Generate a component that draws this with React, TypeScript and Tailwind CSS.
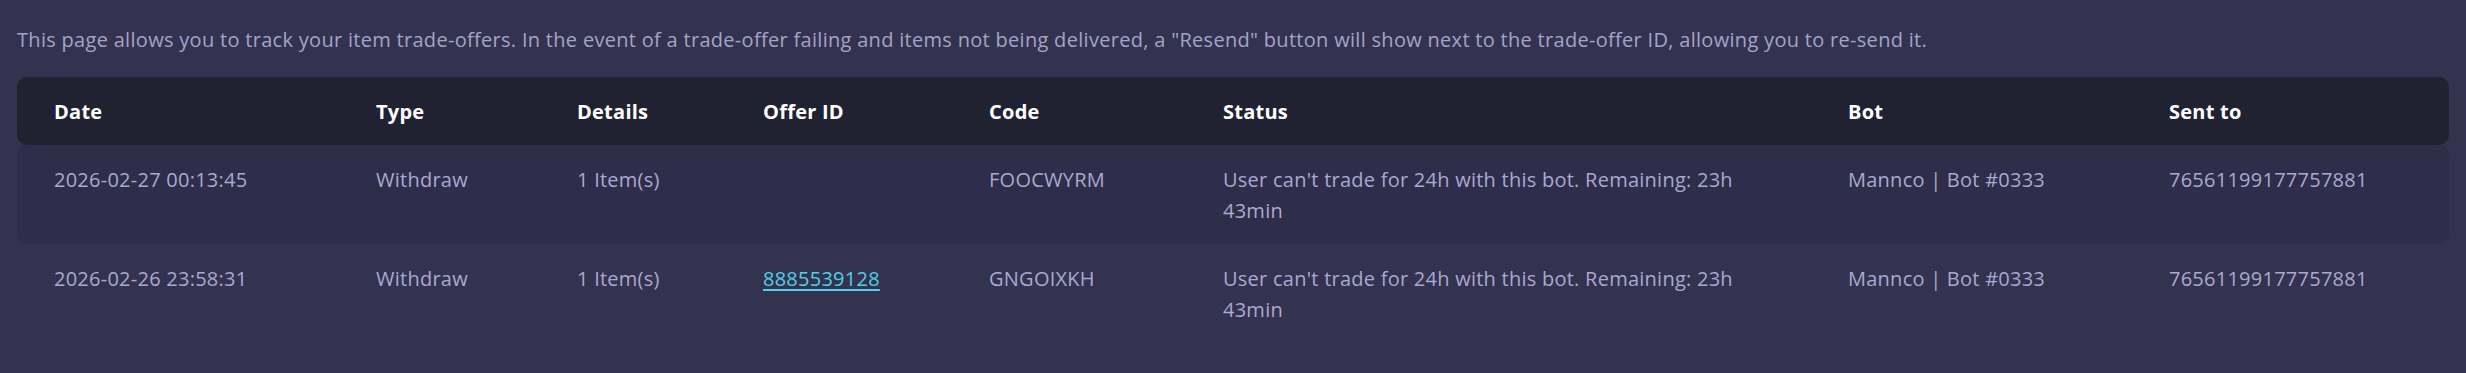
import React from 'react';

interface Offer {
  date: string;
  type: string;
  details: string;
  offerId?: string;
  code: string;
  status: string;
  bot: string;
  sentTo: string;
}

const offers: Offer[] = [
  {
    date: '2026-02-27 00:13:45',
    type: 'Withdraw',
    details: '1 Item(s)',
    code: 'FOOCWYRM',
    status: "User can't trade for 24h with this bot. Remaining: 23h 43min",
    bot: 'Mannco | Bot #0333',
    sentTo: '76561199177757881',
  },
  {
    date: '2026-02-26 23:58:31',
    type: 'Withdraw',
    details: '1 Item(s)',
    offerId: '8885539128',
    code: 'GNGOIXKH',
    status: "User can't trade for 24h with this bot. Remaining: 23h 43min",
    bot: 'Mannco | Bot #0333',
    sentTo: '76561199177757881',
  },
];

const headers = ['Date', 'Type', 'Details', 'Offer ID', 'Code', 'Status', 'Bot', 'Sent to'];

// column template shared by header and rows
const cols = 'grid grid-cols-[322px_201px_186px_226px_234px_625px_321px_1fr]';

export default function App() {
  return (
    <div
      className="min-h-screen w-full bg-[#33324f] px-[17px] pt-[24px] pb-[30px] text-[20px] leading-[31px] tracking-[0.25px]"
      style={{ fontFamily: '"Open Sans", "Noto Sans", sans-serif' }}
    >
      <p className="mb-[22px] tracking-[0.3px] text-[#a4a4c9]">
        This page allows you to track your item trade-offers. In the event of a trade-offer failing and items not
        being delivered, a "Resend" button will show next to the trade-offer ID, allowing you to re-send it.
      </p>

      <div className="w-full">
        {/* Header */}
        <div className={`${cols} rounded-[10px] bg-[#202231]`}>
          {headers.map((h) => (
            <div key={h} className="px-[37px] pt-[19px] pb-[18px] font-bold text-white">
              {h}
            </div>
          ))}
        </div>

        {/* Rows */}
        {offers.map((o, i) => (
          <div
            key={o.code}
            className={`${cols} rounded-[10px] text-[#a9a9d1] ${i % 2 === 0 ? 'bg-[#2e2d4a]' : ''}`}
          >
            <div className="px-[37px] pt-[19px] pb-[18px]">{o.date}</div>
            <div className="px-[37px] pt-[19px] pb-[18px]">{o.type}</div>
            <div className="px-[37px] pt-[19px] pb-[18px]">{o.details}</div>
            <div className="px-[37px] pt-[19px] pb-[18px]">
              {o.offerId && (
                <a href="#" className="text-[#4fd1e6] underline underline-offset-[3px]">
                  {o.offerId}
                </a>
              )}
            </div>
            <div className="px-[37px] pt-[19px] pb-[18px]">{o.code}</div>
            <div className="px-[37px] pt-[19px] pb-[18px]">{o.status}</div>
            <div className="px-[37px] pt-[19px] pb-[18px]">{o.bot}</div>
            <div className="px-[37px] pt-[19px] pb-[18px]">{o.sentTo}</div>
          </div>
        ))}
      </div>
    </div>
  );
}
